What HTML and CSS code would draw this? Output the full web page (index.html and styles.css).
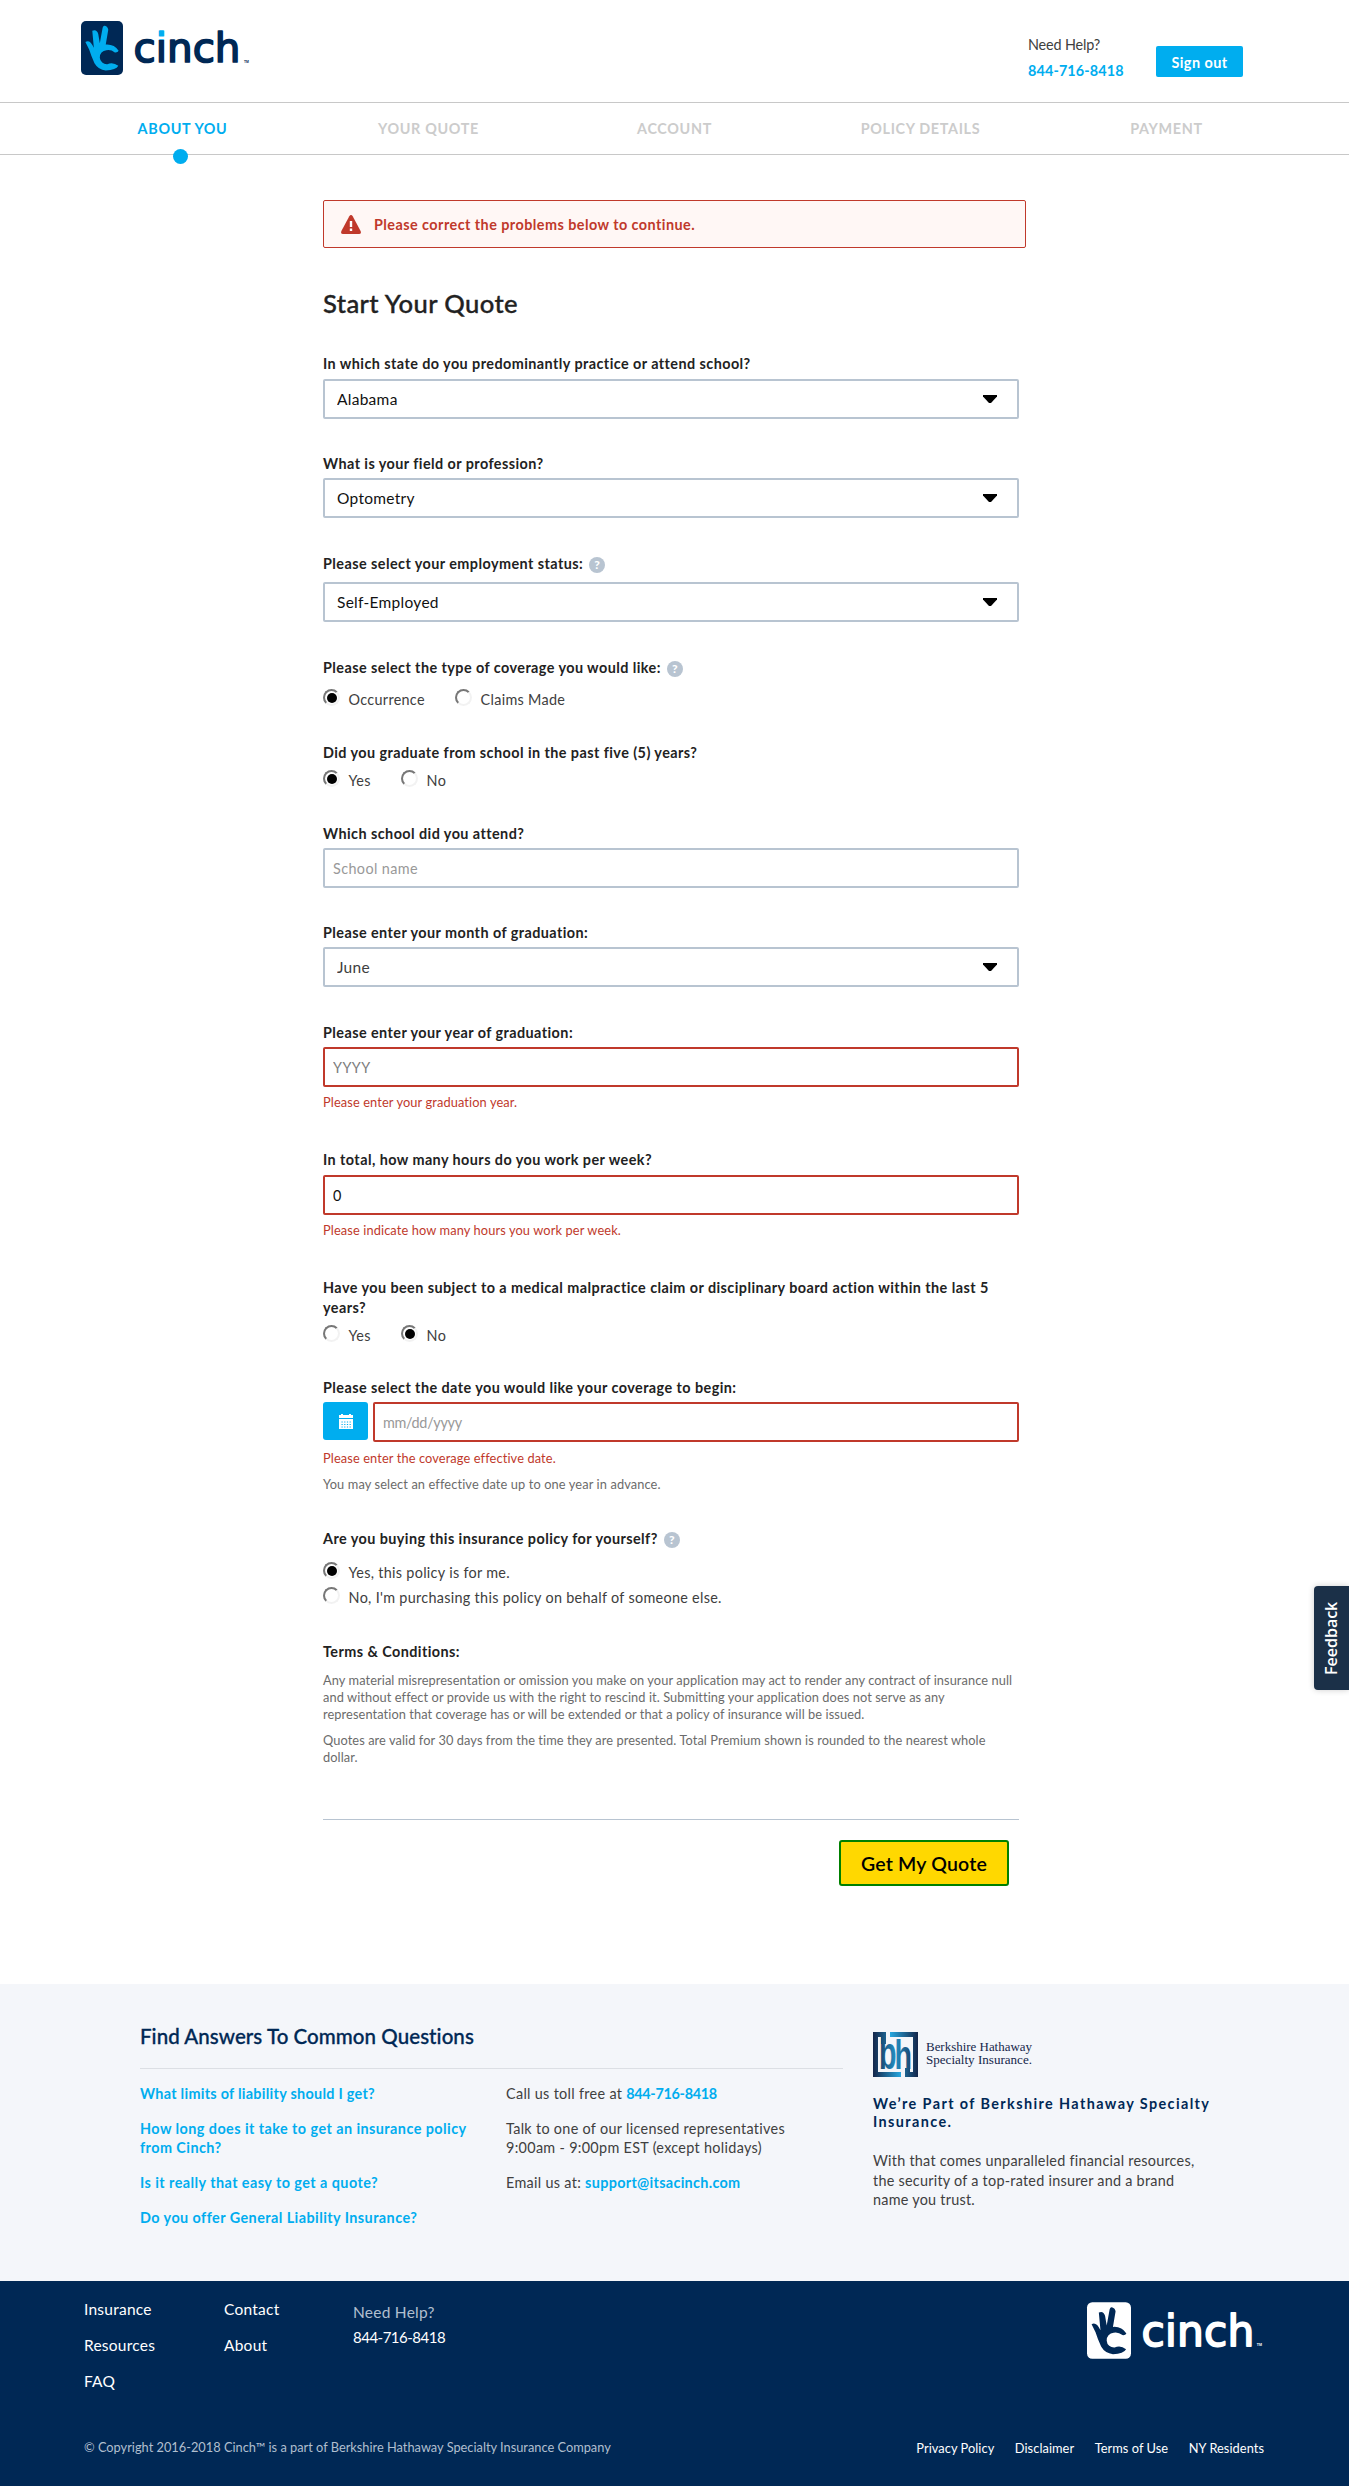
FILE: index.html
```html
<!DOCTYPE html>
<html lang="en">
<head>
<meta charset="utf-8">
<title>Start Your Quote | Cinch</title>
<link rel="stylesheet" href="styles.css">
</head>
<body>
<svg class="defs" width="0" height="0" aria-hidden="true">
  <symbol id="hand" viewBox="0 0 134 170">
    <path d="M14 66Q22 60 31 68Q37 75 41 84L36 30Q50 24 55 40L60 70L69 20Q71 13 76 14Q86 17 87 27L79 74Q106 72 120 94Q117 100 108 99Q95 89 81 92A22 22 0 0 0 84 137Q102 129 119 142Q112 156 79 157Q55 155 43 134Q33 112 26 90Z"/>
  </symbol>
  <symbol id="caret" viewBox="0 0 14 8"><path d="M0 0h14v1.5L8 8H6L0 1.5z"/></symbol>
  <linearGradient id="two-tone" x1="0" x2="0" y1="0" y2="54" gradientUnits="userSpaceOnUse"><stop offset=".345" stop-color="#00adef"/><stop offset=".345" stop-color="#002855"/></linearGradient>
</svg>

<header class="header">
  <svg class="logo" width="168" height="54" viewBox="0 0 168 54">
    <rect class="logo-box" width="42" height="54" rx="5"/>
    <use class="logo-hand" href="#hand" width="42" height="54"/>
    <text class="logo-word" x="52.6" y="41.4">c<tspan class="logo-i">i</tspan>nch</text>
    <text class="logo-tm" x="163" y="42">TM</text>
  </svg>
  <div class="header-side">
    <div class="help"><span>Need Help?</span><a href="#">844-716-8418</a></div>
    <button class="signout">Sign out</button>
  </div>
</header>

<nav class="steps">
  <a class="step step-active" href="#">ABOUT YOU</a>
  <a class="step" href="#">YOUR QUOTE</a>
  <a class="step" href="#">ACCOUNT</a>
  <a class="step" href="#">POLICY DETAILS</a>
  <a class="step" href="#">PAYMENT</a>
</nav>

<main class="main">
  <div class="alert">
    <svg width="20" height="19" viewBox="0 0 20 19"><path class="alert-shape" d="M10 0Q11 0 11.7 1.2L19.6 16Q20.6 19 18 19H2Q-.6 19 .4 16L8.3 1.2Q9 0 10 0z"/><path class="alert-mark" d="M8.8 6h2.4v6H8.8zM8.8 13.6h2.4V16H8.8z"/></svg>
    <span>Please correct the problems below to continue.</span>
  </div>
  <h1>Start Your Quote</h1>

  <form class="form">
    <div class="field gap-6">
      <label>In which state do you predominantly practice or attend school?</label>
      <div class="select"><select><option>Alabama</option></select><svg class="caret"><use href="#caret"/></svg></div>
    </div>
    <div class="field after-35">
      <label>What is your field or profession?</label>
      <div class="select"><select><option>Optometry</option></select><svg class="caret"><use href="#caret"/></svg></div>
    </div>
    <div class="field gap-9 after-35">
      <label>Please select your employment status: <span class="hint">?</span></label>
      <div class="select"><select><option>Self-Employed</option></select><svg class="caret"><use href="#caret"/></svg></div>
    </div>
    <div class="field gap-12 after-33">
      <label>Please select the type of coverage you would like: <span class="hint">?</span></label>
      <div class="radios">
        <span class="radio wide"><i class="dot on"></i>Occurrence</span>
        <span class="radio"><i class="dot"></i>Claims Made</span>
      </div>
    </div>
    <div class="field gap-8 after-33">
      <label>Did you graduate from school in the past five (5) years?</label>
      <div class="radios">
        <span class="radio short"><i class="dot on"></i>Yes</span>
        <span class="radio"><i class="dot"></i>No</span>
      </div>
    </div>
    <div class="field">
      <label>Which school did you attend?</label>
      <input class="input" placeholder="School name">
    </div>
    <div class="field after-35">
      <label>Please enter your month of graduation:</label>
      <div class="select select-gray"><select><option>June</option></select><svg class="caret"><use href="#caret"/></svg></div>
    </div>
    <div class="field after-38">
      <label>Please enter your year of graduation:</label>
      <input class="input invalid dark" placeholder="YYYY">
      <p class="error">Please enter your graduation year.</p>
    </div>
    <div class="field gap-6 after-38">
      <label>In total, how many hours do you work per week?</label>
      <input class="input invalid" value="0">
      <p class="error">Please indicate how many hours you work per week.</p>
    </div>
    <div class="field gap-8 after-32">
      <label>Have you been subject to a medical malpractice claim or disciplinary board action within the last 5 years?</label>
      <div class="radios">
        <span class="radio short"><i class="dot"></i>Yes</span>
        <span class="radio"><i class="dot on"></i>No</span>
      </div>
    </div>
    <div class="field after-35">
      <label>Please select the date you would like your coverage to begin:</label>
      <div class="date">
        <button class="calendar" type="button"><svg width="14" height="15" viewBox="0 0 14 15"><path class="cal-top" d="M0 1h2V0h2v1h6V0h2v1h2v3H0z"/><path class="cal-body" d="M0 5h14v10H0z"/><path class="cal-dots" d="M2.5 8h9.5M2.5 10.5h9.5M2.5 13h9.5"/></svg></button>
        <input class="input invalid big" placeholder="mm/dd/yyyy">
      </div>
      <p class="error">Please enter the coverage effective date.</p>
      <p class="note">You may select an effective date up to one year in advance.</p>
    </div>
    <div class="field gap-14">
      <label>Are you buying this insurance policy for yourself? <span class="hint">?</span></label>
      <div class="radios radios-stack">
        <span class="radio"><i class="dot on"></i>Yes, this policy is for me.</span>
        <span class="radio"><i class="dot"></i>No, I'm purchasing this policy on behalf of someone else.</span>
      </div>
    </div>
    <section class="terms">
      <label>Terms &amp; Conditions:</label>
      <p>Any material misrepresentation or omission you make on your application may act to render any contract of insurance null and without effect or provide us with the right to rescind it. Submitting your application does not serve as any representation that coverage has or will be extended or that a policy of insurance will be issued.</p>
      <p>Quotes are valid for 30 days from the time they are presented. Total Premium shown is rounded to the nearest whole dollar.</p>
    </section>
    <div class="actions"><button class="submit" type="button">Get My Quote</button></div>
  </form>
</main>

<section class="faq">
  <div class="faq-main">
    <h2>Find Answers To Common Questions</h2>
    <div class="faq-cols">
      <div class="faq-list">
        <a class="tight" href="#">What limits of liability should I get?</a>
        <a href="#">How long does it take to get an insurance policy<br>from Cinch?</a>
        <a href="#">Is it really that easy to get a quote?</a>
        <a href="#">Do you offer General Liability Insurance?</a>
      </div>
      <div class="faq-list faq-contact">
        <p>Call us toll free at <a class="phone" href="#">844-716-8418</a></p>
        <p>Talk to one of our licensed representatives<br>9:00am - 9:00pm EST (except holidays)</p>
        <p>Email us at: <a href="#">support@itsacinch.com</a></p>
      </div>
    </div>
  </div>
  <div class="parent">
    <svg width="162" height="45" viewBox="0 0 162 45">
      <defs>
        <linearGradient id="g1" x1="0" x2="28" y1="0" y2="0" gradientUnits="userSpaceOnUse"><stop offset="0" stop-color="#14264a"/><stop offset="1" stop-color="#27a8e0"/></linearGradient>
        <linearGradient id="g2" x1="17" x2="45" y1="0" y2="0" gradientUnits="userSpaceOnUse"><stop offset="0" stop-color="#27a8e0"/><stop offset="1" stop-color="#14264a"/></linearGradient>
      </defs>
      <path fill="url(#g1)" d="M0 0h13v12H8V5H5v35h23v5H0z"/>
      <path fill="url(#g2)" d="M17 0h28v45H32v-9h5v4h3V5H17z"/>
      <text class="mono" fill="url(#g1)" x="6" y="37" font-size="46" textLength="17.5" lengthAdjust="spacingAndGlyphs">b</text>
      <text class="mono" fill="url(#g2)" x="21.5" y="37" font-size="41" textLength="17.5" lengthAdjust="spacingAndGlyphs">h</text>
      <text class="bh-name" x="53" y="19.3" textLength="106" lengthAdjust="spacingAndGlyphs">Berkshire Hathaway</text>
      <text class="bh-name" x="53" y="32.3" textLength="106" lengthAdjust="spacingAndGlyphs">Specialty Insurance.</text>
    </svg>
    <h3>We’re Part of Berkshire Hathaway Specialty<br>Insurance.</h3>
    <p>With that comes unparalleled financial resources,<br>the security of a top-rated insurer and a brand<br>name you trust.</p>
  </div>
</section>

<footer class="footer">
  <div class="footer-top">
    <div class="foot-col foot-one"><a href="#">Insurance</a><a href="#">Resources</a><a href="#">FAQ</a></div>
    <div class="foot-col foot-two"><a href="#">Contact</a><a href="#">About</a></div>
    <div class="foot-help"><span>Need Help?</span><a href="#">844-716-8418</a></div>
    <svg class="logo logo-light" width="176" height="57" viewBox="0 0 168 54">
      <rect class="logo-box" width="42" height="54" rx="5"/>
      <use class="logo-hand" href="#hand" width="42" height="54"/>
      <text class="logo-word" x="52" y="41.4">cinch</text>
      <text class="logo-tm" x="162" y="42">TM</text>
    </svg>
  </div>
  <div class="footer-bottom">
    <span class="copy">© Copyright 2016-2018 Cinch™ is a part of Berkshire Hathaway Specialty Insurance Company</span>
    <div class="legal"><a href="#">Privacy Policy</a><a href="#">Disclaimer</a><a href="#">Terms of Use</a><a href="#">NY Residents</a></div>
  </div>
</footer>

<div class="feedback">Feedback</div>
</body>
</html>
```
FILE: styles.css
```css
* { box-sizing: border-box; }
body {
  margin: 0;
  position: relative;
  background: #fff;
  color: #404040;
  font-family: Lato, "Liberation Sans", sans-serif;
  font-size: 14.4px;
  line-height: 20px;
}
h1, h2, h3, p { margin: 0; }
a { color: #00adef; text-decoration: none; }
button, input, select { font-family: inherit; margin: 0; }
.defs { position: absolute; }

/* Header */
.header {
  display: flex;
  justify-content: space-between;
  height: 102px;
  padding: 21px 106px 0 81px;
}
.logo { flex: none; display: block; overflow: visible; }
.logo-box { fill: #002855; }
.logo-hand { fill: #00adef; }
.logo-word {
  font: 40.4px "DejaVu Sans", sans-serif;
  fill: #002855;
  stroke: #002855;
  stroke-width: 1.7px;
  stroke-linejoin: round;
}
.logo-i { fill: url(#two-tone); stroke: url(#two-tone); }
.logo-tm { font: bold 3.4px "Liberation Sans", sans-serif; fill: #002855; }
.header-side { display: flex; }
.help { display: flex; flex-direction: column; width: 128px; padding-top: 11px; line-height: 26px; letter-spacing: -.15px; }
.help a { font-weight: 700; letter-spacing: .12px; }
.signout {
  width: 87px;
  height: 31px;
  margin-top: 25px;
  padding: 1px 0 0;
  border: 0;
  border-radius: 2px;
  background: #00adef;
  color: #fff;
  font-size: 14.4px;
  font-weight: 700;
  letter-spacing: .45px;
}

/* Progress steps */
.steps {
  display: flex;
  height: 53px;
  padding: 0 59.5px;
  border-top: 1px solid #c8c8c8;
  border-bottom: 1px solid #c8c8c8;
}
.step {
  position: relative;
  flex: 1;
  color: #ccc;
  font-weight: 700;
  line-height: 52px;
  letter-spacing: .65px;
  text-align: center;
}
.step-active { color: #00adef; }
.step-active::after {
  content: "";
  position: absolute;
  left: 113.5px;
  bottom: -10px;
  width: 15px;
  height: 15px;
  border-radius: 50%;
  background: #00adef;
}

/* Form */
.main { width: 703px; margin: 45px 0 0 323px; }
.alert {
  display: flex;
  align-items: center;
  gap: 13px;
  height: 48px;
  padding: 0 17px;
  border: 1px solid #c0392b;
  border-radius: 2px;
  background: #fff7f5;
  color: #c0392b;
  font-weight: 700;
  letter-spacing: .45px;
}
.alert span { padding-top: 2px; }
.alert-shape { fill: #c0392b; }
.alert-mark { fill: #fff; }
h1 {
  margin: 38px 0 32px;
  color: #222;
  font-size: 25.6px;
  font-weight: 500;
  line-height: 35px;
  letter-spacing: .39px;
  -webkit-text-stroke: .35px currentColor;
}
.form { width: 696px; }
.field { display: flex; flex-direction: column; margin-bottom: 34px; }
label { display: block; margin-bottom: 4px; padding-top: 1px; color: #222; font-weight: 700; letter-spacing: .435px; }
.gap-6 label { margin-bottom: 5px; }
.gap-8 label { margin-bottom: 7px; }
.gap-9 label { margin-bottom: 8px; }
.gap-12 label { margin-bottom: 11px; }
.gap-14 label { margin-bottom: 13px; }
.after-32 { margin-bottom: 32px; }
.after-33 { margin-bottom: 33px; }
.after-35 { margin-bottom: 35px; }
.after-38 { margin-bottom: 38px; }
.hint {
  display: inline-block;
  width: 16px;
  height: 16px;
  margin-left: 2px;
  border-radius: 50%;
  background: #b8c4d1;
  color: #fff;
  font-size: 12px;
  font-weight: 900;
  line-height: 16px;
  letter-spacing: 0;
  text-align: center;
}
.select { position: relative; height: 40px; }
.select select {
  appearance: none;
  width: 100%;
  height: 40px;
  padding: 0 12px;
  border: 2px solid #b8c4d1;
  border-radius: 2px;
  background: #fff;
  color: #111;
  font-size: 15.5px;
  letter-spacing: .28px;
}
.select-gray select { color: #404040; }
.caret { position: absolute; right: 22px; top: 16px; width: 14px; height: 8px; }
.input {
  width: 100%;
  height: 40px;
  padding: 0 8px;
  border: 2px solid #b8c4d1;
  border-radius: 2px;
  background: #fff;
  color: #111;
  font-size: 14.4px;
  letter-spacing: .4px;
}
.input::placeholder { color: #999; opacity: 1; }
.dark::placeholder { color: #7d7d7d; letter-spacing: .4px; }
.big { letter-spacing: -.3px; }
.invalid { border-color: #c0392b; }
.error, .note { font-size: 12.8px; line-height: 17px; letter-spacing: .12px; }
.error { margin-top: 7px; color: #c0392b; }
.note { margin-top: 9px; color: #6b6b6b; }
.radios { display: flex; }
.radio { display: flex; height: 20px; line-height: 22px; letter-spacing: .3px; }
.wide { width: 132px; }
.short { width: 78px; }
.radios-stack { flex-direction: column; gap: 5px; }
.dot {
  position: relative;
  width: 17px;
  height: 17px;
  margin-right: 8.6px;
  border: 2px solid;
  border-color: #777 #f2f2f2 #f2f2f2 #777;
  border-radius: 50%;
}
.on::after {
  content: "";
  position: absolute;
  left: 1.5px;
  top: 1.5px;
  width: 10px;
  height: 10px;
  border-radius: 50%;
  background: #000;
}
.date { display: flex; gap: 5px; margin-bottom: 1px; }
.calendar {
  display: flex;
  flex: none;
  align-items: center;
  justify-content: center;
  width: 45px;
  height: 38px;
  border: 0;
  border-radius: 3px;
  background: #00adef;
}
.cal-top, .cal-body { fill: #fff; }
.cal-dots { fill: none; stroke: #00adef; stroke-dasharray: 1.2 1.5; }
.terms { padding-bottom: 53px; border-bottom: 1px solid #b8c4d1; }
.terms label { margin-bottom: 10px; }
.terms p { color: #6b6b6b; font-size: 12.8px; line-height: 17px; letter-spacing: .086px; }
.terms p + p { margin-top: 9px; }
.actions { display: flex; justify-content: flex-end; padding: 20px 10px 0 0; }
.submit {
  width: 170px;
  height: 46px;
  padding: 0;
  border: 2px solid #008000;
  border-radius: 3px;
  background: #ffd800;
  color: #000;
  font-size: 19.5px;
  font-weight: 600;
  letter-spacing: .2px;
}

/* Answers */
.faq {
  display: flex;
  gap: 30px;
  height: 297px;
  margin-top: 98px;
  padding: 39px 0 0 140px;
  background: #f4f6fa;
}
.faq-main { width: 703px; }
h2 {
  padding-bottom: 19px;
  border-bottom: 1px solid #dcdfe4;
  color: #002855;
  font-size: 20.5px;
  font-weight: 500;
  line-height: 26px;
  letter-spacing: .06px;
  -webkit-text-stroke: .3px currentColor;
}
.faq-cols { display: flex; padding-top: 15px; line-height: 19px; }
.faq-list { display: flex; flex-direction: column; gap: 16px; width: 366px; letter-spacing: .44px; }
.faq-list a { font-weight: 700; }
.faq-list .tight { letter-spacing: .28px; }
.faq-contact { width: 337px; letter-spacing: .31px; }
.faq-list .phone { letter-spacing: -.3px; }
.parent { padding-top: 9px; }
.parent svg { display: block; }
.mono { font-family: "Liberation Sans", Arial, sans-serif; font-weight: 700; }
.bh-name { font: 12.5px "Liberation Serif", serif; fill: #14264a; }
h3 { margin: 18px 0 20px; color: #002855; font-size: 14.4px; font-weight: 700; line-height: 18px; letter-spacing: 1.4px; }
.parent p { line-height: 19.5px; letter-spacing: .25px; }

/* Footer */
.footer { height: 205px; padding: 18px 0 0 84px; background: #002855; color: #b0bfcf; }
.footer a { color: #fff; }
.footer-top { display: flex; height: 138px; font-size: 15.5px; letter-spacing: .24px; }
.foot-col { display: flex; flex-direction: column; gap: 16px; }
.foot-one { width: 140px; }
.foot-two { width: 129px; }
.foot-help { display: flex; flex-direction: column; width: 734px; padding-top: 1px; line-height: 25px; }
.foot-help a { font-size: 15px; letter-spacing: -.5px; }
.logo-light { margin-top: 3px; }
.logo-light .logo-box, .logo-light .logo-tm { fill: #fff; }
.logo-light .logo-word { fill: #fff; stroke: #fff; }
.logo-light .logo-hand { fill: #002855; }
.footer-bottom { display: flex; justify-content: space-between; width: 1180px; font-size: 12.8px; letter-spacing: 0; }
.legal { display: flex; gap: 20.5px; padding-top: 1px; letter-spacing: .06px; }

.feedback {
  position: absolute;
  right: 0;
  top: 1586px;
  width: 35px;
  height: 104px;
  border-radius: 0 4px 4px 0;
  background: #1b3048;
  box-shadow: 0 0 6px rgba(0, 0, 0, .2);
  color: #fff;
  font: 600 16px/35px "Open Sans", sans-serif;
  text-align: center;
  writing-mode: vertical-rl;
  transform: rotate(180deg);
}
```
